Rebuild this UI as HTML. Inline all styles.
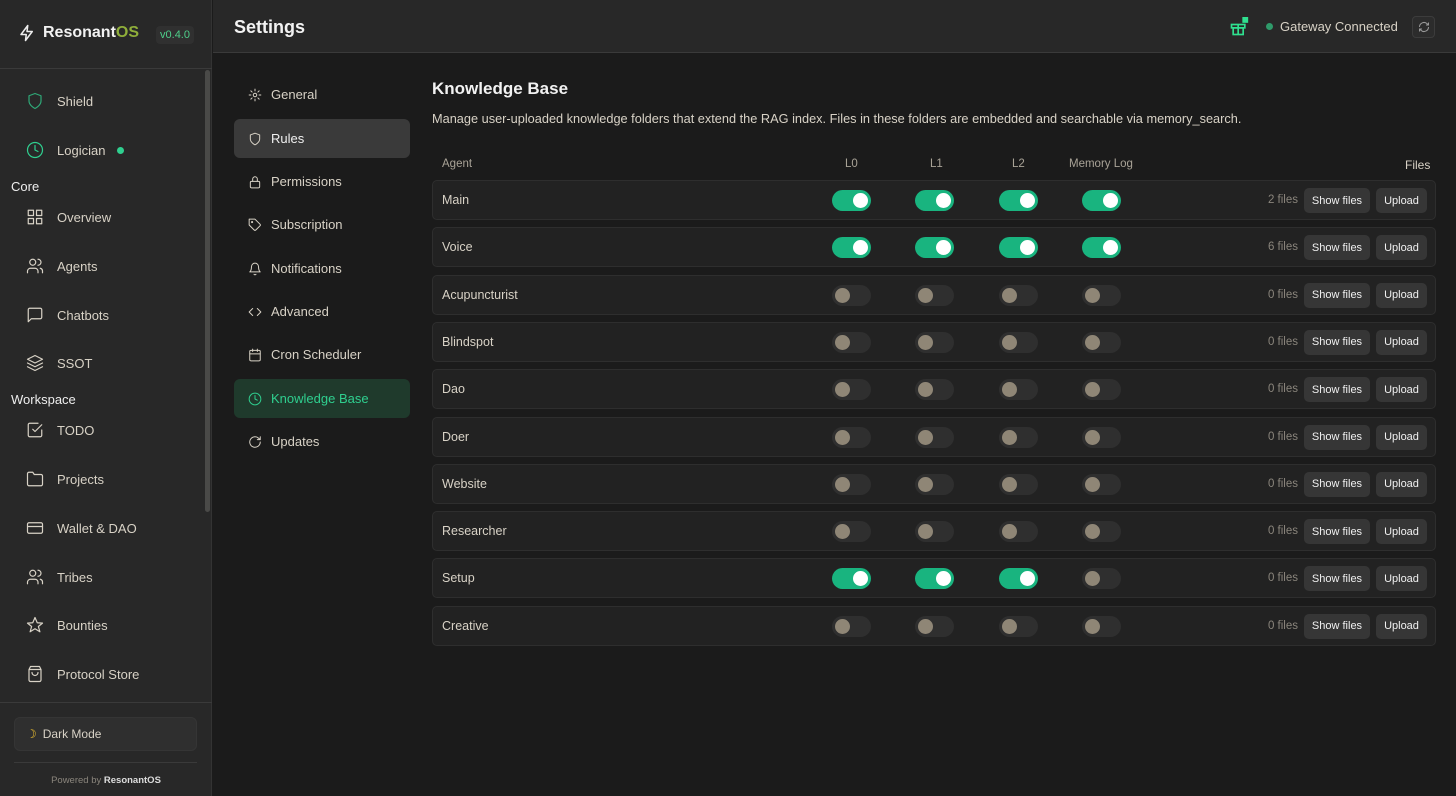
<!DOCTYPE html>
<html><head><meta charset="utf-8"><style>
*{box-sizing:border-box;margin:0;padding:0}
body{width:1456px;height:796px;background:#1b1b1b;font-family:"Liberation Sans",sans-serif;color:#d8d2c6;position:relative;overflow:hidden}
.abs{position:absolute}
.side{left:0;top:0;width:212px;height:796px;background:#282828;border-right:1px solid #333}
.hdr{left:213px;top:0;width:1243px;height:53px;background:#282828;border-bottom:1px solid #3a3a3a}
.si{position:absolute;left:26px;font-size:13px;color:#d8d2c6;display:flex;align-items:center}
.si svg{width:18px;height:18px;margin-right:13px;fill:none;stroke:#d8d2c6;stroke-width:1.6;stroke-linecap:round;stroke-linejoin:round}
.sec{position:absolute;left:11px;font-size:13px;color:#eee}
.ni{position:absolute;left:234px;width:176px;height:39px;border-radius:6px;font-size:13px;display:flex;align-items:center;padding-left:14px}
.ni svg{width:14px;height:14px;margin-right:9px;fill:none;stroke:#d8d2c6;stroke-width:1.7;stroke-linecap:round;stroke-linejoin:round}
.row{position:absolute;left:432px;width:1004px;height:40px;border:1px solid #2e2e2e;border-radius:5px;background:#222;font-size:12.5px}
.row .n{position:absolute;left:9px;top:12px}
.tg{position:absolute;top:9px;width:39px;height:21px;border-radius:11px;background:#2f2f2f}
.tg i{position:absolute;top:3px;left:3px;width:15px;height:15px;border-radius:50%;background:#8f8676}
.tg.on{background:#19b47f}
.tg.on i{left:21px;background:#fff}
.fc{position:absolute;right:137px;top:13px;font-size:11.5px;color:#8a857c}
.b{position:absolute;top:7px;height:25px;border-radius:5px;background:#363636;color:#f0f0f0;font-size:11px;display:flex;align-items:center;justify-content:center}
.th{position:absolute;top:158px;font-size:11.5px;color:#a9a397}
</style></head><body>
<div class="abs side">
 <div class="abs" style="left:18px;top:24px;display:flex;align-items:center">
  <svg width="18" height="18" viewBox="0 0 24 24" fill="none" stroke="#eee" stroke-width="2" stroke-linejoin="round"><path d="M13 2L4 14h7l-1 8 9-12h-7z"/></svg>
  <span style="margin-left:7px;font-size:16px;font-weight:bold;color:#f2f2f2">Resonant<span style="color:#8fae3a">OS</span></span>
 </div>
 <div class="abs" style="left:156px;top:26px;width:38px;height:18px;border-radius:4px;background:#303030;color:#4ecf8a;font-size:11px;text-align:center;line-height:18px">v0.4.0</div>
 <div class="abs" style="left:0;top:68px;width:212px;height:1px;background:#3a3a3a"></div>
 <div class="abs" style="left:205px;top:70px;width:5px;height:442px;background:#4a4a48;border-radius:3px"></div>
 <div class="si" style="top:92px"><svg viewBox="0 0 24 24" style="stroke:#2fa877"><path d="M12 22s8-4 8-10V5l-8-3-8 3v7c0 6 8 10 8 10z"/></svg>Shield</div>
 <div class="si" style="top:141px"><svg viewBox="0 0 24 24" style="stroke:#2fcf8f"><circle cx="12" cy="12" r="10"/><path d="M12 6v6l4 2"/></svg>Logician<span style="display:inline-block;width:7px;height:7px;border-radius:50%;background:#2fcf8f;margin-left:12px"></span></div>
 <div class="sec" style="top:179px">Core</div>
 <div class="si" style="top:208px"><svg viewBox="0 0 24 24"><rect x="3" y="3" width="7" height="7"/><rect x="14" y="3" width="7" height="7"/><rect x="3" y="14" width="7" height="7"/><rect x="14" y="14" width="7" height="7"/></svg>Overview</div>
 <div class="si" style="top:257px"><svg viewBox="0 0 24 24"><circle cx="9" cy="7" r="4"/><path d="M2 21v-2a4 4 0 014-4h6a4 4 0 014 4v2M16 3a4 4 0 010 8M22 21v-2a4 4 0 00-3-4"/></svg>Agents</div>
 <div class="si" style="top:306px"><svg viewBox="0 0 24 24"><path d="M21 15a2 2 0 01-2 2H7l-4 4V5a2 2 0 012-2h14a2 2 0 012 2z"/></svg>Chatbots</div>
 <div class="si" style="top:354px"><svg viewBox="0 0 24 24"><path d="M12 2L2 7l10 5 10-5zM2 17l10 5 10-5M2 12l10 5 10-5"/></svg>SSOT</div>
 <div class="sec" style="top:392px">Workspace</div>
 <div class="si" style="top:421px"><svg viewBox="0 0 24 24"><path d="M9 11l3 3 9-9M21 12v7a2 2 0 01-2 2H5a2 2 0 01-2-2V5a2 2 0 012-2h11"/></svg>TODO</div>
 <div class="si" style="top:470px"><svg viewBox="0 0 24 24"><path d="M22 19a2 2 0 01-2 2H4a2 2 0 01-2-2V5a2 2 0 012-2h5l2 3h9a2 2 0 012 2z"/></svg>Projects</div>
 <div class="si" style="top:519px"><svg viewBox="0 0 24 24"><rect x="2" y="5" width="20" height="14" rx="2"/><path d="M2 10h20"/></svg>Wallet &amp; DAO</div>
 <div class="si" style="top:568px"><svg viewBox="0 0 24 24"><circle cx="9" cy="7" r="4"/><path d="M2 21v-2a4 4 0 014-4h6a4 4 0 014 4v2M16 3a4 4 0 010 8M22 21v-2a4 4 0 00-3-4"/></svg>Tribes</div>
 <div class="si" style="top:616px"><svg viewBox="0 0 24 24"><path d="M12 2l3 7 7 .5-5.5 4.5 2 7L12 17l-6.5 4 2-7L2 9.5 9 9z"/></svg>Bounties</div>
 <div class="si" style="top:665px"><svg viewBox="0 0 24 24"><path d="M6 2h12l2 4v14a2 2 0 01-2 2H6a2 2 0 01-2-2V6zM4 6h16M8 10a4 4 0 008 0"/></svg>Protocol Store</div>
 <div class="abs" style="left:0;top:702px;width:212px;height:1px;background:#3a3a3a"></div>
 <div class="abs" style="left:14px;top:717px;width:183px;height:34px;border-radius:6px;background:#2f2f2f;border:1px solid #353535;font-size:12px;display:flex;align-items:center;padding-left:11px"><span style="color:#f2c230;margin-right:6px">&#x263D;</span>Dark Mode</div>
 <div class="abs" style="left:14px;top:762px;width:183px;height:1px;background:#3a3a3a"></div>
 <div class="abs" style="left:0;top:775px;width:212px;text-align:center;font-size:9.5px;color:#8a857c">Powered by <b style="color:#ddd">ResonantOS</b></div>
</div>
<div class="abs hdr">
 <div class="abs" style="left:21px;top:17px;font-size:18px;font-weight:bold;color:#f2f2f2">Settings</div>
 <svg class="abs" style="left:1016px;top:17px" width="20" height="20" viewBox="0 0 24 24" fill="none" stroke="#2fe08f" stroke-width="2"><rect x="3" y="9" width="16" height="4"/><rect x="5" y="13" width="12" height="8"/><path d="M11 9v12"/><rect x="17" y="1" width="5" height="5" fill="#2fe08f"/></svg>
 <div class="abs" style="left:1053px;top:23px;width:7px;height:7px;border-radius:50%;background:#2f9a6a"></div>
 <div class="abs" style="left:1067px;top:19px;font-size:13px;color:#d8d2c6">Gateway Connected</div>
 <div class="abs" style="left:1199px;top:16px;width:23px;height:22px;border:1px solid #3c3c3c;border-radius:4px;background:#2c2c2c"><svg style="position:absolute;left:5px;top:4px" width="12" height="12" viewBox="0 0 24 24" fill="none" stroke="#999" stroke-width="2"><path d="M21 12a9 9 0 01-15 6.7L3 16M3 12a9 9 0 0115-6.7L21 8M21 3v5h-5M3 21v-5h5"/></svg></div>
</div>
<div class="ni" style="top:75px"><svg viewBox="0 0 24 24"><circle cx="12" cy="12" r="3"/><path d="M12 2v3M12 19v3M2 12h3M19 12h3M4.9 4.9l2.1 2.1M17 17l2.1 2.1M4.9 19.1L7 17M17 7l2.1-2.1"/></svg>General</div>
<div class="ni" style="top:119px;background:#3a3a3a;color:#f0f0f0"><svg viewBox="0 0 24 24"><path d="M12 22s8-4 8-10V5l-8-3-8 3v7c0 6 8 10 8 10z"/></svg>Rules</div>
<div class="ni" style="top:162px"><svg viewBox="0 0 24 24"><rect x="4" y="11" width="16" height="11" rx="2"/><path d="M8 11V7a4 4 0 018 0v4"/></svg>Permissions</div>
<div class="ni" style="top:205px"><svg viewBox="0 0 24 24"><path d="M20.6 13.4l-7.2 7.2a2 2 0 01-2.8 0L2 12V2h10l8.6 8.6a2 2 0 010 2.8z"/><circle cx="7" cy="7" r="1"/></svg>Subscription</div>
<div class="ni" style="top:249px"><svg viewBox="0 0 24 24"><path d="M18 8a6 6 0 00-12 0c0 7-3 9-3 9h18s-3-2-3-9M13.7 21a2 2 0 01-3.4 0"/></svg>Notifications</div>
<div class="ni" style="top:292px"><svg viewBox="0 0 24 24"><path d="M16 18l6-6-6-6M8 6l-6 6 6 6"/></svg>Advanced</div>
<div class="ni" style="top:335px"><svg viewBox="0 0 24 24"><rect x="3" y="4" width="18" height="18" rx="2"/><path d="M16 2v4M8 2v4M3 10h18"/></svg>Cron Scheduler</div>
<div class="ni" style="top:379px;background:#1f3a2c;color:#2fcf8f"><svg viewBox="0 0 24 24" style="stroke:#2fcf8f"><circle cx="12" cy="12" r="10"/><path d="M12 6v6l4 2"/></svg>Knowledge Base</div>
<div class="ni" style="top:422px"><svg viewBox="0 0 24 24"><path d="M21 12a9 9 0 11-3-6.7L21 8M21 3v5h-5"/></svg>Updates</div>
<div class="abs" style="left:432px;top:79px;font-size:17px;font-weight:bold;color:#f2f2f2">Knowledge Base</div>
<div class="abs" style="left:432px;top:111px;font-size:12.75px;color:#d8d2c6">Manage user-uploaded knowledge folders that extend the RAG index. Files in these folders are embedded and searchable via memory_search.</div>
<div class="th" style="left:442px">Agent</div>
<div class="th" style="left:845px">L0</div>
<div class="th" style="left:930px">L1</div>
<div class="th" style="left:1012px">L2</div>
<div class="th" style="left:1069px">Memory Log</div>
<div class="th" style="left:1405px;color:#d8d2c6;font-size:12px">Files</div>
<div id="rows"></div>
<script>
var d=[["Main",1,1,1,1,2],["Voice",1,1,1,1,6],["Acupuncturist",0,0,0,0,0],["Blindspot",0,0,0,0,0],["Dao",0,0,0,0,0],["Doer",0,0,0,0,0],["Website",0,0,0,0,0],["Researcher",0,0,0,0,0],["Setup",1,1,1,0,0],["Creative",0,0,0,0,0]];
var h="",xs=[399,482,566,649];
d.forEach(function(r,i){var t=180+i*47.3;h+='<div class="row" style="top:'+t+'px"><span class="n">'+r[0]+'</span>';
for(var k=0;k<4;k++)h+='<div class="tg'+(r[k+1]?' on':'')+'" style="left:'+xs[k]+'px"><i></i></div>';
h+='<span class="fc">'+r[5]+' files</span><div class="b" style="left:871px;width:66px">Show files</div><div class="b" style="left:943px;width:51px">Upload</div></div>';});
document.getElementById("rows").innerHTML=h;
</script>
</body></html>
